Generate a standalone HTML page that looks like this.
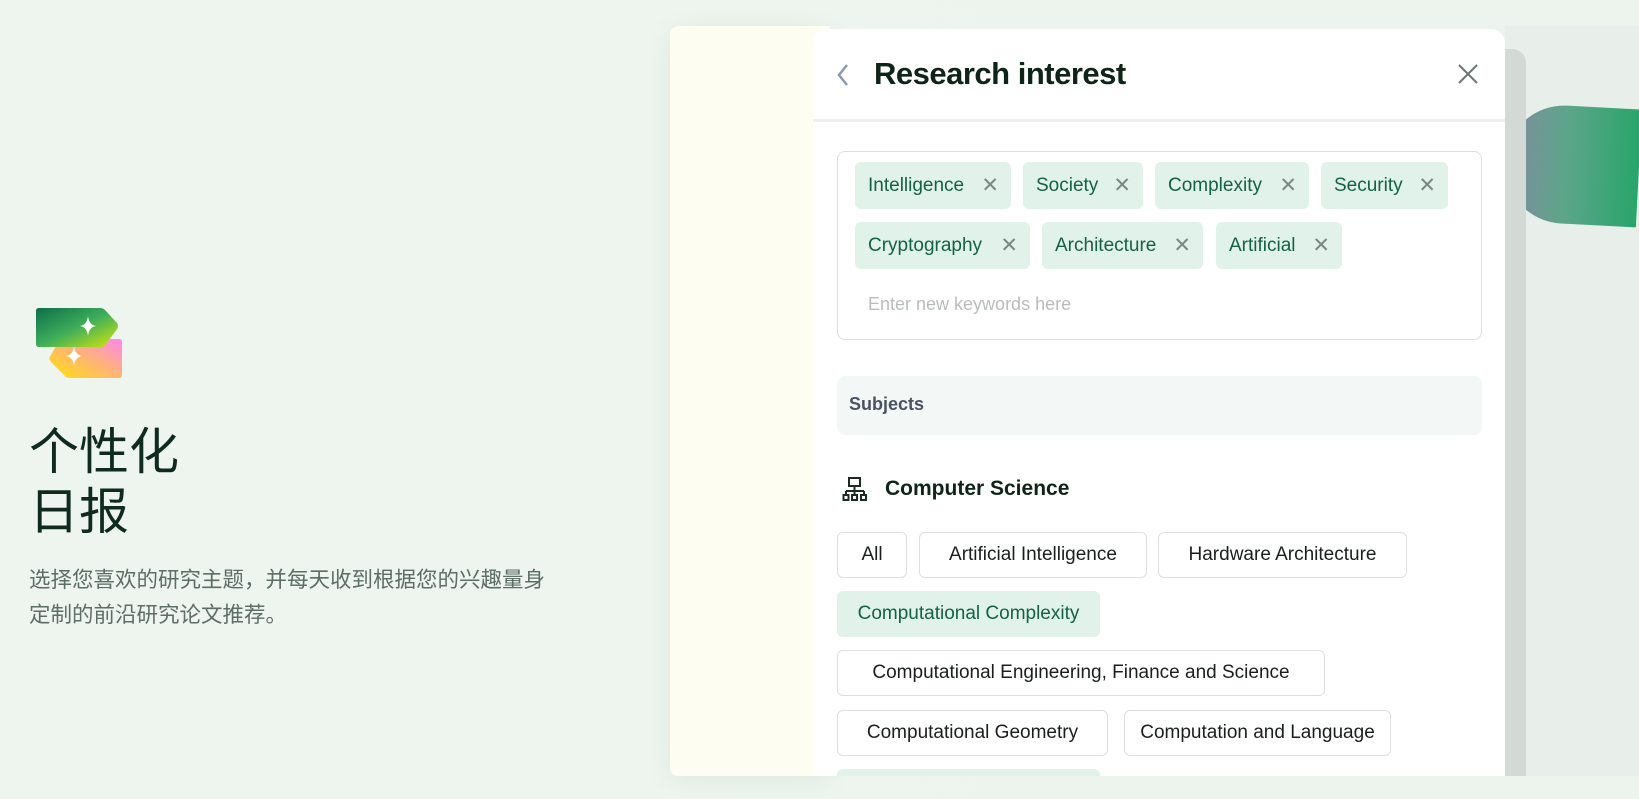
<!DOCTYPE html>
<html><head><meta charset="utf-8"><style>
*{margin:0;padding:0;box-sizing:border-box}
body{width:1639px;height:799px;overflow:hidden;background:linear-gradient(90deg,#eef5ef,#edf4ee);font-family:"Liberation Sans","Noto Sans CJK SC",sans-serif;position:relative}
.abs{position:absolute}
.h1{left:29px;top:418px;font-size:50px;line-height:60px;color:#0f2a1e;font-family:"Noto Sans CJK SC",sans-serif;font-weight:400}
.desc{left:29px;top:561px;font-size:21.5px;line-height:35px;color:#5c6e66;font-family:"Noto Sans CJK SC",sans-serif;width:535px}
.rightbg{left:1505px;top:26px;width:134px;height:750px;background:#e8eeea}
.shadowcard{left:1480px;top:49px;width:46px;height:727px;background:#d3d9d5;border-radius:0 14px 0 0}
.cream{left:670px;top:26px;width:160px;height:750px;background:#fdfdf1;border-radius:8px 0 0 8px;box-shadow:0 4px 30px rgba(0,0,0,.06)}
.panel{left:813px;top:29px;width:692px;height:747px;background:#fff;border-radius:14px 14px 0 0;overflow:hidden}
.tag{position:absolute;height:47px;background:#e0f2ea;border-radius:6px;color:#146245;font-size:19px;line-height:47px;padding-left:13px}
.tag span{position:absolute;right:12px;top:0;color:#7b8783;font-size:21px}
.chip{position:absolute;height:46px;border:1.5px solid #dcdfe0;border-radius:6px;font-size:19px;line-height:43px;text-align:center;color:#1a1f1c}
.chip.g{background:#e0f2ea;border-color:#e0f2ea;color:#146245}
</style></head><body>
<div class="abs rightbg"></div>
<div class="abs" style="left:1505px;top:106px;width:134px;height:118px;border-radius:60px 0 0 60px/60px 0 0 60px;background:linear-gradient(90deg,#838aa0,#5da58a 45%,#28a56a);transform:rotate(3deg)"></div>
<div class="abs shadowcard"></div>
<div class="abs cream"></div>
<div class="abs panel">
  <svg class="abs" style="left:22px;top:33px" width="16" height="26" viewBox="0 0 16 26"><path d="M12 3 L4 13 L12 23" stroke="#8a9ab0" stroke-width="2.5" fill="none"/></svg>
  <div class="abs" style="left:61px;top:27px;font-size:31px;font-weight:bold;color:#0f2419;letter-spacing:-0.5px">Research interest</div>
  <svg class="abs" style="left:644px;top:34px" width="22" height="22" viewBox="0 0 22 22"><path d="M2 2 L20 20 M20 2 L2 20" stroke="#6e7672" stroke-width="2"/></svg>
  <div class="abs" style="left:0;top:90px;width:692px;height:3px;background:#eef0ef"></div>
  <div class="abs" style="left:24px;top:122px;width:645px;height:189px;border:1.5px solid #dcdfe0;border-radius:8px"></div>
  <div class="tag" style="left:42px;top:133px;width:156px">Intelligence<span>✕</span></div>
  <div class="tag" style="left:210px;top:133px;width:120px">Society<span>✕</span></div>
  <div class="tag" style="left:342px;top:133px;width:154px">Complexity<span>✕</span></div>
  <div class="tag" style="left:508px;top:133px;width:127px">Security<span>✕</span></div>
  <div class="tag" style="left:42px;top:193px;width:175px">Cryptography<span>✕</span></div>
  <div class="tag" style="left:229px;top:193px;width:161px">Architecture<span>✕</span></div>
  <div class="tag" style="left:403px;top:193px;width:126px">Artificial<span>✕</span></div>
  <div class="abs" style="left:55px;top:265px;font-size:18px;color:#b8bdbb">Enter new keywords here</div>
  <div class="abs" style="left:24px;top:347px;width:645px;height:59px;background:#f3f7f5;border-radius:8px;font-size:18px;font-weight:bold;color:#4a5366;padding:18px 0 0 12px">Subjects</div>
  <svg class="abs" style="left:29px;top:447px" width="26" height="26" viewBox="0 0 26 26" fill="none" stroke="#1c2a24" stroke-width="2"><rect x="7" y="2" width="11" height="8"/><path d="M12.5 10v5M4 15h18M4 15v4M12.5 15v4M22 15v4"/><rect x="1.5" y="19" width="5" height="5"/><rect x="10" y="19" width="5" height="5"/><rect x="19" y="19" width="5" height="5"/></svg>
  <div class="abs" style="left:72px;top:448px;font-size:21px;font-weight:bold;color:#0f2419">Computer Science</div>
  <div class="chip" style="left:24px;top:503px;width:70px">All</div>
  <div class="chip" style="left:106px;top:503px;width:228px">Artificial Intelligence</div>
  <div class="chip" style="left:345px;top:503px;width:249px">Hardware Architecture</div>
  <div class="chip g" style="left:24px;top:562px;width:263px">Computational Complexity</div>
  <div class="chip" style="left:24px;top:621px;width:488px">Computational Engineering, Finance and Science</div>
  <div class="chip" style="left:24px;top:681px;width:271px">Computational Geometry</div>
  <div class="chip" style="left:311px;top:681px;width:267px">Computation and Language</div>
  <div class="chip g" style="left:24px;top:740px;width:263px"></div>
</div>
<svg class="abs" style="left:36px;top:308px" width="88" height="74" viewBox="0 0 88 74">
<defs><linearGradient id="a" x1="0" y1="0" x2="1" y2="1"><stop offset="0" stop-color="#0b6e4a"/><stop offset=".5" stop-color="#3fae5a"/><stop offset="1" stop-color="#d8e70a"/></linearGradient>
<linearGradient id="b" x1="0" y1="1" x2="1" y2="0"><stop offset="0" stop-color="#ffe20a"/><stop offset=".5" stop-color="#ffb570"/><stop offset="1" stop-color="#ff88f0"/></linearGradient></defs>
<path d="M26 31 H83 Q86 31 86 34 V67 Q86 70 83 70 H34 Q31 70 29 68 L15 54 Q12 50 15 47 L22 34 Q24 31 26 31 Z" fill="url(#b)"/>
<path d="M3 0 H64 Q67 0 69 2 L81 15 Q83 18 81 21 L70 36 Q68 39 65 39 H3 Q0 39 0 36 V3 Q0 0 3 0 Z" fill="url(#a)"/>
<path d="M52 8 Q53 17 60 18 Q53 19 52 28 Q51 19 44 18 Q51 17 52 8Z" fill="#fff"/>
<path d="M38 38 Q39 47 46 48 Q39 49 38 58 Q37 49 30 48 Q37 47 38 38Z" fill="#fff"/>
</svg>
<div class="abs h1">个性化<br>日报</div>
<div class="abs desc">选择您喜欢的研究主题，并每天收到根据您的兴趣量身定制的前沿研究论文推荐。</div>
</body></html>
